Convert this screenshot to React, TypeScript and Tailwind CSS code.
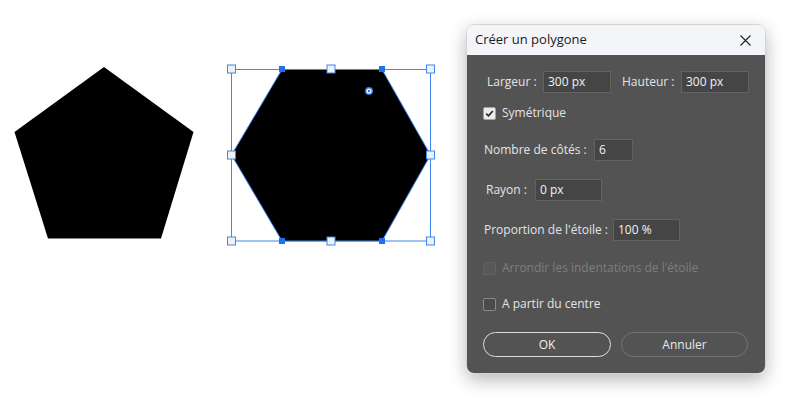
import React from 'react';

const font = { fontFamily: '"Open Sans", "Noto Sans", sans-serif' };

function Field({ value, width }: { value: string; width: string }) {
  return (
    <div
      className={`${width} h-[22px] bg-[#454545] border border-[#626262] text-[#f2f2f2] text-[12px] leading-[20px] pl-[4px]`}
    >
      {value}
    </div>
  );
}

function Check({ checked, disabled }: { checked?: boolean; disabled?: boolean }) {
  if (checked) {
    return (
      <div className="w-[13px] h-[13px] rounded-[2px] bg-[#ececec] border border-[#7fa8e0] flex items-center justify-center">
        <svg width="9" height="9" viewBox="0 0 9 9">
          <path d="M1.2 4.6 L3.5 6.8 L7.8 2" stroke="#2b2b2b" strokeWidth="1.8" fill="none" />
        </svg>
      </div>
    );
  }
  return (
    <div
      className={
        disabled
          ? 'w-[13px] h-[13px] rounded-[2px] bg-[#585858] border border-[#626262]'
          : 'w-[13px] h-[13px] rounded-[2px] bg-[#4a4a4a] border border-[#8a8a8a]'
      }
    />
  );
}

function Canvas() {
  const blue = '#3f86f0';
  const handles = [
    [231.5, 69],
    [331, 69],
    [430.5, 69],
    [231.5, 155],
    [430.5, 155],
    [231.5, 241],
    [331, 241],
    [430.5, 241],
  ];
  const vertices = [
    [282, 69],
    [382, 69],
    [282, 241],
    [382, 241],
  ];
  return (
    <svg width="466" height="398" viewBox="0 0 466 398" className="shrink-0">
      <polygon points="104,67 193.5,132 161,238.5 48,238.5 14.5,132" fill="#000" />
      <rect x="231.5" y="69.5" width="199" height="171.5" fill="none" stroke={blue} strokeWidth="1" />
      <polygon
        points="282,69.5 382,69.5 430.5,155 382,241 282,241 231.5,155"
        fill="#000"
        stroke={blue}
        strokeWidth="1"
      />
      {handles.map(([x, y], i) => (
        <rect key={i} x={x - 4} y={y - 4} width="8" height="8" fill="#f1f1f1" stroke={blue} strokeWidth="1" />
      ))}
      {vertices.map(([x, y], i) => (
        <rect key={i} x={x - 3} y={y - 3} width="6" height="6" fill="#1a73f0" />
      ))}
      <circle cx="369" cy="91" r="4" fill="#2f7be8" />
      <circle cx="369" cy="91" r="2.6" fill="#fff" />
      <circle cx="369" cy="91" r="1.3" fill="#2f7be8" />
    </svg>
  );
}

export default function App() {
  return (
    <div className="w-[791px] h-[398px] bg-white flex overflow-hidden" style={font}>
      <Canvas />

      {/* Dialog */}
      <div className="w-[300px] h-[350px] mt-[24px] rounded-[8px] overflow-hidden border border-[#d4d4d4] shadow-[0_6px_18px_rgba(0,0,0,0.28)] flex flex-col shrink-0">
        <div className="h-[30px] bg-[#f3f5f9] flex items-center justify-between pl-[8px] pr-[14px]">
          <span className="text-[13px] text-[#1b1b1b]">Créer un polygone</span>
          <svg width="11" height="11" viewBox="0 0 11 11">
            <path d="M0.5 0.5 L10.5 10.5 M10.5 0.5 L0.5 10.5" stroke="#222" strokeWidth="1.1" />
          </svg>
        </div>

        <div className="flex-1 bg-[#535353] flex flex-col pt-[16px] text-[12px] text-[#e4e4e4]">
          <div className="flex items-center pl-[20px] h-[22px]">
            <span className="w-[56px]">Largeur :</span>
            <Field value="300 px" width="w-[68px]" />
            <span className="w-[59px] ml-[11px]">Hauteur :</span>
            <Field value="300 px" width="w-[68px]" />
          </div>

          <div className="flex items-center gap-[6px] pl-[16px] h-[16px] mt-[12px]">
            <Check checked />
            <span>Symétrique</span>
          </div>

          <div className="flex items-center pl-[17px] h-[22px] mt-[18px]">
            <span className="w-[110px]">Nombre de côtés :</span>
            <Field value="6" width="w-[39px]" />
          </div>

          <div className="flex items-center pl-[19px] h-[22px] mt-[18px]">
            <span className="w-[49px]">Rayon :</span>
            <Field value="0 px" width="w-[67px]" />
          </div>

          <div className="flex items-center pl-[17px] h-[22px] mt-[18px]">
            <span className="w-[129px]">Proportion de l'étoile :</span>
            <Field value="100 %" width="w-[67px]" />
          </div>

          <div className="flex items-center gap-[6px] pl-[16px] h-[16px] mt-[19px] text-[#7e7e7e]">
            <Check disabled />
            <span>Arrondir les indentations de l'étoile</span>
          </div>

          <div className="flex items-center gap-[6px] pl-[16px] h-[16px] mt-[20px]">
            <Check />
            <span>A partir du centre</span>
          </div>

          <div className="flex items-center gap-[10px] pl-[16px] mt-[20px]">
            <button className="w-[128px] h-[25px] rounded-full border-[1.5px] border-[#dcdcdc] text-[12px] text-[#f0f0f0]">
              OK
            </button>
            <button className="w-[127px] h-[25px] rounded-full border border-[#747474] text-[12px] text-[#e8e8e8]">
              Annuler
            </button>
          </div>
        </div>
      </div>
    </div>
  );
}
